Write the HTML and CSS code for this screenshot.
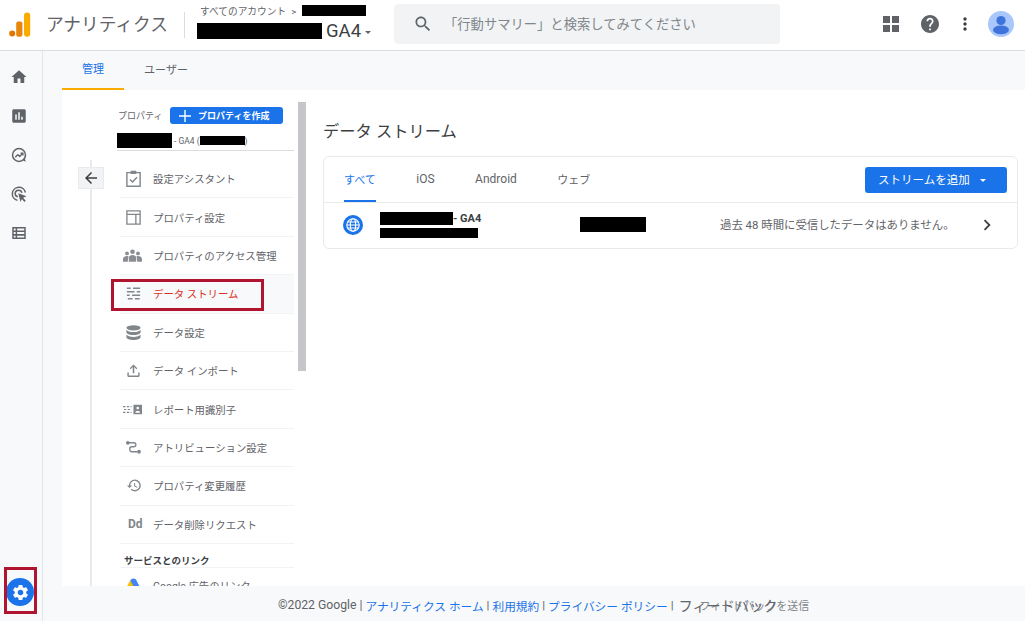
FILE: index.html
```html
<!DOCTYPE html>
<html lang="ja">
<head>
    <meta charset="UTF-8">
    <title>アナリティクス</title>
    <link rel="stylesheet" href="styles.css">
</head>
<body>
    <!-- Top bar -->
    <header class="topbar">
        <svg class="logo" viewBox="0 0 22 25" width="22" height="25">
            <circle cx="3.2" cy="21.6" r="3" fill="#e37400"/>
            <rect x="7.2" y="9.5" width="6.2" height="15.2" rx="2" fill="#e8860c"/>
            <rect x="15" y="0.5" width="6.2" height="24.2" rx="3" fill="#f9ab00"/>
        </svg>
        <div class="brand">アナリティクス</div>
        <div class="account">
            <div class="crumb">すべてのアカウント <span class="crumb-sep">&gt;</span><span class="redact r-account"></span></div>
            <div class="view"><span class="redact r-view"></span><span class="view-name">GA4</span><span class="caret"></span></div>
        </div>
        <div class="search">
            <svg viewBox="0 0 24 24" width="20" height="20"><path fill="#5f6368" d="M15.5 14h-.79l-.28-.27C15.41 12.59 16 11.11 16 9.5 16 5.91 13.09 3 9.5 3S3 5.91 3 9.5 5.91 16 9.5 16c1.61 0 3.09-.59 4.23-1.57l.27.28v.79l5 4.99L20.49 19l-4.99-5zm-6 0C7.01 14 5 11.99 5 9.5S7.01 5 9.5 5 14 7.01 14 9.5 11.99 14 9.5 14z"/></svg>
            <span class="search-text">「行動サマリー」と検索してみてください</span>
        </div>
        <div class="top-icons">
            <svg viewBox="0 0 16 16" width="16" height="16"><path fill="#5f6368" d="M0 0h7v7H0zM9 0h7v7H9zM0 9h7v7H0zM9 9h7v7H9z"/></svg>
            <svg viewBox="2 2 20 20" width="18" height="18"><path fill="#5f6368" d="M12 2C6.48 2 2 6.48 2 12s4.48 10 10 10 10-4.48 10-10S17.52 2 12 2zm1 17h-2v-2h2v2zm2.07-7.75l-.9.92C13.45 12.9 13 13.5 13 15h-2v-.5c0-1.1.45-2.1 1.17-2.83l1.24-1.26c.37-.36.59-.86.59-1.41 0-1.1-.9-2-2-2s-2 .9-2 2H8c0-2.21 1.79-4 4-4s4 1.79 4 4c0 .88-.36 1.68-.93 2.25z"/></svg>
            <svg viewBox="0 0 4 14" width="4" height="14"><g fill="#3c4043"><circle cx="2" cy="2" r="1.7"/><circle cx="2" cy="7" r="1.7"/><circle cx="2" cy="12" r="1.7"/></g></svg>
            <svg viewBox="0 0 26 26" width="26" height="26"><circle cx="13" cy="13" r="13" fill="#a8c7fa"/><circle cx="13" cy="9.5" r="4.6" fill="#3f73dc"/><ellipse cx="13" cy="18.8" rx="8" ry="4.4" fill="#3f73dc"/></svg>
        </div>
    </header>

    <div class="body-row">
        <!-- Left rail -->
        <nav class="rail">
            <div class="rail-icons">
                <svg viewBox="0 0 24 24" width="18" height="18"><path d="M10 20v-6h4v6h5v-8h3L12 3 2 12h3v8z"/></svg>
                <svg viewBox="0 0 24 24" width="18" height="18"><path d="M19 3H5c-1.1 0-2 .9-2 2v14c0 1.1.9 2 2 2h14c1.100 0 2-.9 2-2V5c0-1.100-.9-2-2-2zM9 17H7v-7h2v7zm4 0h-2V7h2v10zm4 0h-2v-4h2v4z"/></svg>
                <svg viewBox="0 0 24 24" width="18" height="18"><circle cx="12" cy="12" r="8.600" fill="none" stroke="#5f6368" stroke-width="2"/><path d="M17 19l4 2-1-4z"/><path fill="none" stroke="#5f6368" stroke-width="1.800" d="M7 15l3.500-3.500 2.500 2.500 4-4.500M14 9.500h3.200v3.200"/></svg>
                <svg viewBox="0 0 24 24" width="18" height="18"><g fill="none" stroke="#5f6368" stroke-width="2"><path d="M10 20.500A8.800 8.800 0 1 1 20.500 10"/><path d="M10.500 15.800A4.500 4.500 0 1 1 15.800 10.500"/></g><path d="M11 11l11 4-4.500 2 3.500 4-1.800 1.500-3.400-4-1.800 4z"/></svg>
                <svg viewBox="0 0 24 24" width="18" height="18"><path d="M3 4h18v16H3zM5 6v2.500h2.500V6zm4.500 0v2.500H19V6zM5 10.700v2.600h2.500v-2.600zm4.500 0v2.600H19v-2.600zM5 15.500V18h2.500v-2.500zm4.500 0V18H19v-2.500z" fill-rule="evenodd"/></svg>
            </div>
            <div class="rail-gear">
                <svg viewBox="0 0 24 24" width="19" height="19"><path fill="#fff" d="M19.14 12.94c.04-.3.06-.61.06-.94 0-.32-.02-.64-.07-.94l2.030-1.580c.18-.14.23-.41.12-.61l-1.920-3.320c-.12-.22-.37-.29-.59-.22l-2.390.96c-.5-.38-1.030-.7-1.620-.94l-.36-2.540c-.04-.24-.24-.41-.48-.41h-3.840c-.24 0-.43.17-.47.41l-.36 2.540c-.59.24-1.130.57-1.620.94l-2.390-.96c-.22-.08-.47 0-.59.22L2.740 8.870c-.12.21-.08.47.12.61l2.030 1.580c-.05.3-.09.63-.09.94s.02.64.07.94l-2.030 1.580c-.18.14-.23.41-.12.61l1.920 3.320c.12.22.37.29.59.22l2.390-.96c.5.38 1.030.7 1.620.94l.36 2.540c.05.24.24.41.48.41h3.840c.24 0 .44-.17.47-.41l.36-2.540c.59-.24 1.130-.56 1.620-.94l2.390.96c.22.08.47 0 .59-.22l1.920-3.320c.12-.22.07-.47-.12-.61l-2.010-1.580zM12 15.600c-1.980 0-3.600-1.620-3.600-3.600s1.620-3.600 3.600-3.600 3.600 1.620 3.600 3.600-1.620 3.600-3.600 3.600z"/></svg>
            </div>
        </nav>

        <main class="main">
            <div class="tabs">
                <div class="tab tab-on">管理</div>
                <div class="tab">ユーザー</div>
            </div>

            <div class="panel">
                <!-- Property column -->
                <section class="prop-col">
                    <div class="back-col">
                        <div class="back">
                            <svg viewBox="0 0 24 24" width="18" height="18"><path fill="#3c4043" d="M20 11H7.830l5.590-5.590L12 4l-8 8 8 8 1.410-1.410L7.830 13H20v-2z"/></svg>
                        </div>
                    </div>
                    <div class="prop-list">
                        <div class="prop-head">
                            <span class="prop-label">プロパティ</span>
                            <span class="create-btn">
                                <svg viewBox="0 0 12 12" width="12" height="12"><path fill="#fff" d="M5.300 0h1.400v5.300H12v1.400H6.700V12H5.300V6.700H0V5.300h5.300z"/></svg>
                                プロパティを作成
                            </span>
                        </div>
                        <div class="prop-name"><span class="redact r-prop"></span><span>- GA4 (</span><span class="redact r-prop2"></span><span>)</span></div>

                        <div class="item item-first">
                            <svg class="item-icon" viewBox="0 0 16 18"><path fill="none" stroke="#80868b" stroke-width="1.500" d="M1 2.800h14v14.400H1z"/><path fill="#80868b" d="M5 .8h6v3.400H5z"/><path fill="none" stroke="#80868b" stroke-width="1.500" d="M4.300 10l2.700 2.700 4.700-5"/></svg>
                            <span>設定アシスタント</span>
                        </div>
                        <div class="item">
                            <svg class="item-icon" viewBox="-1 -1 18 18"><path fill="none" stroke="#80868b" stroke-width="1.400" d="M1 1h14v14H1zM1 4.600h14M10.500 4.600V15"/></svg>
                            <span>プロパティ設定</span>
                        </div>
                        <div class="item">
                            <svg class="item-icon item-icon-wide" viewBox="0 0 18 12"><g fill="#8a8d91"><circle cx="9" cy="2.400" r="2.200"/><circle cx="3.800" cy="4" r="1.800"/><circle cx="14.200" cy="4" r="1.800"/><path d="M0 12V9c0-1.500 2-2.600 3.800-2.600 1 0 1.300.2 1.300.2L4.500 12zM18 12V9c0-1.500-2-2.600-3.800-2.600-1 0-1.300.2-1.300.2l.6 5.400zM5.500 12V7.800c0-1.300 1.700-2.200 3.500-2.200s3.500.9 3.500 2.200V12z"/></g></svg>
                            <span>プロパティのアクセス管理</span>
                        </div>
                        <div class="item item-on">
                            <svg class="item-icon" viewBox="-1 -2 18 18"><path fill="none" stroke="#80868b" stroke-width="1.700" d="M1 1.500h4M7.500 1.500H15M1 5.200h8M11.500 5.200H15M1 8.900h3M6.500 8.900H15M2 12.500h5M9.500 12.500h5"/></svg>
                            <span>データ ストリーム</span>
                        </div>
                        <div class="item">
                            <svg class="item-icon" viewBox="-1 -1 18 18"><g fill="#80868b"><ellipse cx="8" cy="3" rx="7.500" ry="2.800"/><path d="M.5 5.200C1.500 7 4.500 7.600 8 7.600s6.500-.6 7.500-2.400v3C14.500 10 11.500 10.700 8 10.700S1.500 10 .5 8.200zM.5 10.200c1 1.800 4 2.500 7.500 2.500s6.500-.7 7.500-2.500V13c0 1.700-3.400 3-7.500 3S.5 14.700.5 13z"/></g></svg>
                            <span>データ設定</span>
                        </div>
                        <div class="item">
                            <svg class="item-icon" viewBox="-2 -2 18 18"><path fill="#80868b" d="M6.200 10V3.300L3.900 5.600 3 4.600 7 .6l4 4-.9 1-2.300-2.300V10zM.5 9h1.500v3.400h10V9h1.500v3.600c0 .7-.6 1.200-1.200 1.200H1.700c-.7 0-1.200-.5-1.200-1.200z"/></svg>
                            <span>データ インポート</span>
                        </div>
                        <div class="item">
                            <svg class="item-icon item-icon-wide" viewBox="0 0 20 10"><path fill="none" stroke="#80868b" stroke-width="1.300" stroke-dasharray="2.500 1.500" d="M0 2h9M1 5h7M0 8h9"/><path fill="#80868b" fill-rule="evenodd" d="M11 0h9v10h-9zM15.500 2a1.400 1.400 0 1 0 0 2.800 1.400 1.400 0 0 0 0-2.800zM13 8.500h5c0-1.500-1.200-2.200-2.500-2.200S13 7 13 8.500z"/></svg>
                            <span>レポート用識別子</span>
                        </div>
                        <div class="item">
                            <svg class="item-icon" viewBox="-1 -2 18 18"><g fill="#80868b"><circle cx="2" cy="2" r="2"/><circle cx="13.800" cy="11.500" r="2"/></g><path fill="none" stroke="#80868b" stroke-width="1.400" d="M3 2h5.500c1.500 0 2 1 2 2s-.7 2.200-2.200 2.200H6C4.800 6.200 4 7 4 8.500s.8 3 2.300 3H12"/></svg>
                            <span>アトリビューション設定</span>
                        </div>
                        <div class="item">
                            <svg class="item-icon" viewBox="-2 0 26 24"><path fill="#80868b" d="M13 3a9 9 0 0 0-9 9H1l3.900 3.900L9 12H6a7 7 0 1 1 2.100 4.900l-1.400 1.400A9 9 0 1 0 13 3zm-1 5v5l4.300 2.500.7-1.200-3.500-2.100V8z"/></svg>
                            <span>プロパティ変更履歴</span>
                        </div>
                        <div class="item">
                            <span class="item-dd">Dd</span>
                            <span>データ削除リクエスト</span>
                        </div>
                        <div class="group-label">サービスとのリンク</div>
                        <div class="item item-last">
                            <svg class="item-icon" viewBox="0 0 16 15"><path fill="#fbbc04" d="M5 1.500L0 11l3.800 3 5-9z"/><path fill="#4285f4" d="M8 0c-1.500 0-2.500.8-3 1.800l6.200 11.500c1 1.700 4.800.5 4.300-2L10.800 1.800C10.200.7 9.300 0 8 0z"/><circle cx="3" cy="12" r="2.800" fill="#34a853"/></svg>
                            <span>Google 広告のリンク</span>
                        </div>
                    </div>
                    <div class="scrollbar"><div class="scroll-thumb"></div></div>
                </section>

                <!-- Streams -->
                <section class="streams">
                    <h2 class="streams-title">データ ストリーム</h2>
                    <div class="card">
                        <div class="card-tabs">
                            <div class="card-tab card-tab-on">すべて</div>
                            <div class="card-tab">iOS</div>
                            <div class="card-tab">Android</div>
                            <div class="card-tab card-tab-kana">ウェブ</div>
                            <div class="add-btn">ストリームを追加<span class="caret caret-white"></span></div>
                        </div>
                        <div class="stream-row">
                            <svg class="globe" viewBox="0 0 20 20" width="20" height="20">
                                <circle cx="10" cy="10" r="10" fill="#1a73e8"/>
                                <g fill="none" stroke="#fff" stroke-width="1.100"><circle cx="10" cy="10" r="6.200"/><ellipse cx="10" cy="10" rx="2.700" ry="6.200"/><path d="M3.800 10h12.400M4.700 7h10.600M4.700 13h10.600"/></g>
                            </svg>
                            <div class="stream-names">
                                <div class="stream-top"><span class="redact r-stream"></span><b>- GA4</b></div>
                                <span class="redact r-url"></span>
                            </div>
                            <span class="redact r-id"></span>
                            <span class="stream-status">過去 48 時間に受信したデータはありません。</span>
                            <svg class="chevron" viewBox="0 0 24 24" width="22" height="22"><path fill="#3c4043" d="M10 6L8.590 7.410 13.170 12l-4.580 4.590L10 18l6-6z"/></svg>
                        </div>
                    </div>
                </section>
            </div>

            <footer class="footer">
                <span class="copyright">©2022 Google |</span>
                <a>アナリティクス ホーム</a>
                <span>|</span>
                <a>利用規約</a>
                <span>|</span>
                <a>プライバシー ポリシー</a>
                <span>|</span>
                <span class="feedback"><span class="feedback-over">フィードバック</span>フィードバックを送信</span>
            </footer>
        </main>
    </div>

    <!-- Red annotation boxes -->
    <div class="mark mark-stream"></div>
    <div class="mark mark-gear"></div>
</body>
</html>
```

FILE: styles.css
```css
* {
    box-sizing: border-box;
}
html, body {
    height: 100%;
}
body {
    margin: 0;
    height: 621px;
    overflow: hidden;
    display: flex;
    flex-direction: column;
    position: relative;
    font-family: Roboto, "Noto Sans CJK JP", sans-serif;
    color: #5f6368;
    background-color: #f8f9fa;
}
.redact {
    display: block;
    background-color: #000;
    flex: none;
}

/* top bar */
.topbar {
    height: 51px;
    flex: none;
    display: flex;
    align-items: center;
    background-color: #fff;
    border-bottom: 1px solid #dadce0;
    padding-left: 9px;
}
.logo {
    flex: none;
    margin-top: -2px;
}
.brand {
    width: 139px;
    margin-left: 15px;
    font-size: 17.700px;
    color: #5f6368;
    margin-top: -1px;
    border-right: 1px solid #dadce0;
    line-height: 26px;
    white-space: nowrap;
}
.account {
    width: 197px;
    margin-left: 12px;
    margin-top: -3px;
}
.crumb {
    display: flex;
    align-items: center;
    font-size: 9.700px;
    height: 14px;
    white-space: nowrap;
    padding-left: 3px;
    margin-bottom: 3px;
    margin-top: -3px;
}
.crumb-sep {
    margin: 0 6px 0 5px;
}
.r-account {
    width: 64px;
    height: 11px;
    margin-top: -1px;
}
.view {
    display: flex;
    align-items: center;
    height: 19px;
    padding-top: 1px;
}
.r-view {
    width: 125px;
    height: 16px;
}
.view-name {
    margin-left: 4px;
    font-size: 18.500px;
    color: #3c4043;
}
.caret {
    display: block;
    margin-left: 4px;
    margin-top: 2px;
    border-left: 3.500px solid transparent;
    border-right: 3.500px solid transparent;
    border-top: 3.500px solid #5f6368;
}
.caret-white {
    margin-left: 10px;
    border-top-color: #fff;
}
.search {
    width: 386px;
    height: 40px;
    margin-top: -3px;
    display: flex;
    align-items: center;
    padding-left: 19px;
    background-color: #f1f3f4;
    border-radius: 4px;
}
.search-text {
    margin-left: 11px;
    font-size: 13.300px;
    color: #80868b;
}
.top-icons {
    margin-left: auto;
    display: flex;
    align-items: center;
    margin-top: -3px;
    padding-right: 11px;
}
.top-icons svg:nth-child(2) {
    margin-left: 22px;
}
.top-icons svg:nth-child(3) {
    margin-left: 24px;
}
.top-icons svg:nth-child(4) {
    margin-left: 21px;
}

/* rail */
.body-row {
    flex: 1;
    min-height: 0;
    display: flex;
}
.rail {
    width: 43px;
    flex: none;
    display: flex;
    flex-direction: column;
    border-right: 1px solid #e3e5e8;
    background-color: #f8f9fa;
}
.rail-icons {
    display: flex;
    flex-direction: column;
    align-items: center;
    gap: 21px;
    padding-top: 17px;
    padding-right: 4px;
}
.rail-icons svg {
    fill: #5f6368;
}
.rail-gear {
    width: 28px;
    height: 28px;
    margin-top: auto;
    margin-left: 6px;
    margin-bottom: 15px;
    display: flex;
    align-items: center;
    justify-content: center;
    border-radius: 50%;
    background-color: #1a73e8;
}

/* main */
.main {
    flex: 1;
    min-width: 0;
    display: flex;
    flex-direction: column;
}
.tabs {
    height: 39px;
    flex: none;
    display: flex;
    margin-left: 19px;
}
.tab {
    width: 62px;
    margin-right: 20px;
    display: flex;
    align-items: center;
    justify-content: center;
    font-size: 11px;
    white-space: nowrap;
    padding-bottom: 3px;
}
.tab:last-child {
    width: 44px;
}
.tab-on {
    color: #1a73e8;
    border-bottom: 2px solid #f9ab00;
}
.panel {
    flex: 1;
    min-height: 0;
    margin-left: 19px;
    display: flex;
    background-color: #fff;
    overflow: hidden;
}

/* property column */
.prop-col {
    width: 244px;
    flex: none;
    display: flex;
}
.back-col {
    width: 56px;
    flex: none;
    padding: 77px 0 0 16px;
    position: relative;
}
.back-col::before {
    content: "";
    position: absolute;
    left: 28px;
    top: 70px;
    bottom: 0;
    width: 2px;
    background-color: #e8eaed;
}
.back {
    position: relative;
    width: 26px;
    height: 22px;
    display: flex;
    align-items: center;
    justify-content: center;
    background-color: #f1f3f4;
    border: 1px solid #e8eaed;
}
.prop-list {
    width: 174px;
    flex: none;
    padding-top: 17px;
    margin: 0 4px 0 2px;
}
.prop-head {
    display: flex;
    align-items: center;
    height: 17px;
    margin-left: -2px;
}
.prop-label {
    font-size: 9px;
    width: 52px;
    white-space: nowrap;
}
.create-btn {
    width: 113px;
    height: 17px;
    display: flex;
    align-items: center;
    gap: 7px;
    padding-left: 9px;
    font-size: 9px;
    font-weight: 700;
    white-space: nowrap;
    color: #fff;
    background-color: #1a73e8;
    border-radius: 3px;
}
.prop-name {
    display: flex;
    align-items: center;
    height: 27px;
    padding-top: 7px;
    font-size: 8.500px;
    border-bottom: 1px solid #dadce0;
    white-space: nowrap;
    margin-left: -3px;
}
.r-prop {
    width: 55px;
    height: 15px;
    margin-right: 2px;
}
.r-prop2 {
    width: 45px;
    height: 9px;
}
.item {
    height: 38.400px;
    display: flex;
    align-items: center;
    font-size: 10.400px;
    white-space: nowrap;
    border-bottom: 1px solid #f1f3f4;
    padding-left: 5px;
}
.item-first {
    margin-top: 9px;
}
.item-icon {
    width: 17px;
    height: 17px;
    flex: none;
    margin-right: 11px;
}
.item-icon-wide {
    width: 19px;
    margin-left: -2px;
    margin-right: 11px;
}
.item-dd {
    width: 17px;
    margin: 0 8px 0 3px;
    font-size: 12px;
    font-weight: 700;
    color: #80868b;
}
.item-on {
    color: #d93025;
    background-color: #f8f9fa;
}
.group-label {
    height: 21px;
    display: flex;
    align-items: flex-end;
    font-size: 9.500px;
    font-weight: 700;
    color: #3c4043;
    padding-left: 4px;
    border-bottom: 1px solid #f1f3f4;
    margin-top: 3px;
}
.item-last {
    border-bottom: 0;
    height: 36px;
    padding-top: 10px;
    align-items: flex-start;
}
.scrollbar {
    width: 8px;
    flex: none;
    padding-top: 12px;
}
.scroll-thumb {
    width: 8px;
    height: 269px;
    background-color: #c4c6c9;
}

/* streams */
.streams {
    flex: 1;
    min-width: 0;
    padding: 30px 7px 0 17px;
}
.streams-title {
    margin: 0 0 13px;
    font-size: 16.300px;
    font-weight: 400;
    line-height: 23px;
    color: #3c4043;
}
.card {
    height: 93px;
    background-color: #fff;
    border: 1px solid #e8eaed;
    border-radius: 6px;
}
.card-tabs {
    height: 46px;
    display: flex;
    align-items: stretch;
    padding: 0 10px 0 20px;
    border-bottom: 1px solid #e8eaed;
}
.card-tab {
    display: flex;
    align-items: center;
    margin-right: 40.500px;
    padding-bottom: 2px;
    font-size: 12px;
    color: #5f6368;
}
.card-tab-kana {
    font-size: 11px;
}
.card-tab-on {
    font-size: 11px;
    color: #1a73e8;
    box-shadow: inset 0 -2px 0 #1a73e8;
}
.add-btn {
    width: 142px;
    height: 26px;
    margin: 10px 0 0 auto;
    display: flex;
    align-items: center;
    padding: 0 0 2px 13px;
    font-size: 11.500px;
    color: #fff;
    background-color: #1a73e8;
    border-radius: 3px;
}
.stream-row {
    height: 45px;
    display: flex;
    align-items: center;
    padding-left: 19px;
    padding-bottom: 2px;
}
.globe {
    flex: none;
}
.stream-names {
    width: 200px;
    margin-left: 17px;
}
.stream-top {
    display: flex;
    align-items: center;
    font-size: 11px;
    color: #3c4043;
    margin-bottom: 3px;
}
.r-stream {
    width: 73px;
    height: 13px;
}
.r-url {
    width: 98px;
    height: 10px;
}
.r-id {
    width: 66px;
    height: 15px;
}
.stream-status {
    margin: -1px 0 0 74px;
    width: 256px;
    font-size: 11.400px;
    white-space: nowrap;
}
.chevron {
    flex: none;
}

/* footer */
.footer {
    height: 35px;
    flex: none;
    display: flex;
    align-items: center;
    gap: 3px;
    padding: 3px 0 0 235px;
    font-size: 11.700px;
    color: #5f6368;
    white-space: nowrap;
}
.copyright {
    font-size: 12.200px;
}
.footer a {
    color: #1a73e8;
}
.feedback {
    position: relative;
    margin-left: 23px;
    font-size: 11px;
    color: #80868b;
}
.feedback-over {
    position: absolute;
    left: -21px;
    top: 0;
    width: 100px;
    font-size: 14.200px;
    line-height: 18px;
    color: #5f6368;
}

/* annotation boxes lying over the page */
.mark {
    position: absolute;
    border: 3px solid #b0142f;
}
.mark-stream {
    left: 111px;
    top: 279px;
    width: 153px;
    height: 32px;
}
.mark-gear {
    left: 4px;
    top: 567px;
    width: 33px;
    height: 47px;
}
```
